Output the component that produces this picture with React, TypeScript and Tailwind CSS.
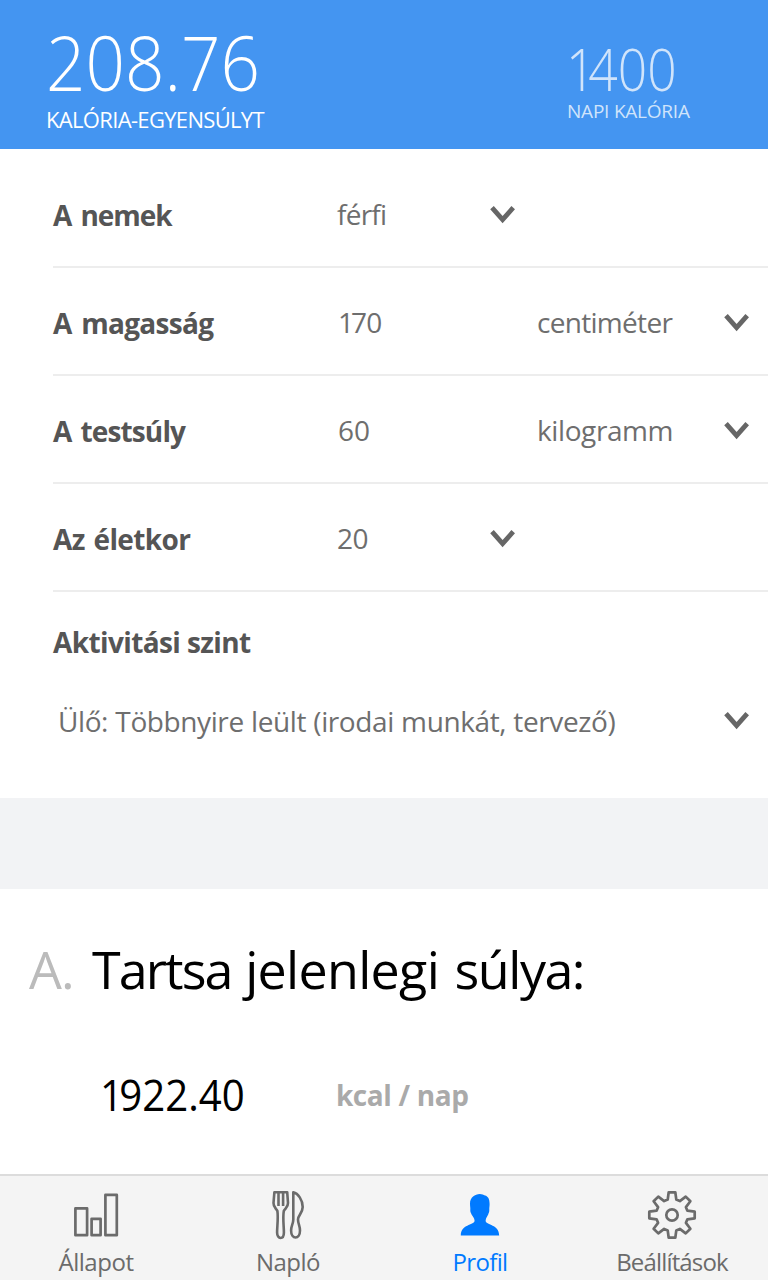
import type { ReactNode } from "react";

function Chevron() {
  return (
    <svg width="26" height="18" viewBox="0 0 26 18" fill="none" className="shrink-0">
      <path d="M2 1.7 12.600 13.600 23.200 1.700" stroke="#666" strokeWidth="4.8" />
    </svg>
  );
}

function Row({ label, children }: { label: ReactNode; children: ReactNode }) {
  return (
    <div className="flex h-[108px] items-center border-b-2 border-[#ededed] pt-[3px] text-[28px]">
      <div className="w-[284px] pt-px font-bold text-[#555]">{label}</div>
      {children}
    </div>
  );
}

const value = "pb-px text-[#6e6e6e]";

function Tab({ label, icon, active = false }: { label: ReactNode; icon: ReactNode; active?: boolean }) {
  return (
    <div className={active ? "flex w-48 flex-col items-center text-[#007aff]" : "flex w-48 flex-col items-center text-[#6b6b6b]"}>
      <div className="h-[62px] pt-[9px]">{icon}</div>
      <div className="text-[24px] leading-[47px] whitespace-nowrap">{label}</div>
    </div>
  );
}

const teeth = [0, 45, 90, 135, 180, 225, 270, 315];

function Gear() {
  const r = (n: number) => Math.round(n * 100) / 100;
  const pts: string[] = [];
  teeth.forEach((deg) => {
    const spin = (x: number, y: number) => {
      const a = (deg * Math.PI) / 180;
      return `${r(30 + x * Math.cos(a) - y * Math.sin(a))} ${r(30 + x * Math.sin(a) + y * Math.cos(a))}`;
    };
    pts.push(spin(-4.3, -15.4), spin(-3.3, -22.7), spin(3.3, -22.7), spin(4.3, -15.4));
  });
  return (
    <svg width="60" height="60" viewBox="0 0 60 60" fill="none" stroke="currentColor" strokeWidth="2.7" strokeLinejoin="round">
      <path d={`M${pts.join("L")}Z`} />
      <circle cx="30" cy="30" r="5.7" />
    </svg>
  );
}

export default function App() {
  return (
    <div className="flex h-[1280px] w-[768px] flex-col overflow-hidden bg-white font-['Open_Sans','Noto_Sans',sans-serif]">
      <header className="flex h-[149px] shrink-0 justify-between bg-[#4495f1] pr-[76px] pl-[46px] text-white">
        <div className="pt-[12px]">
          <div className="origin-left scale-x-[0.91] text-[76px] leading-[99px] font-light">208.76</div>
          <div className="text-[22px] leading-[16px] tracking-[-0.67px]">KALÓRIA-EGYENSÚLYT</div>
        </div>
        <div className="w-[126px] pt-[34px] whitespace-nowrap text-[#d0e4fb]">
          <div className="origin-left scale-x-[0.89] text-[58px] leading-[69px] font-light">
            <span className="tracking-[-8px]">1</span>400
          </div>
          <div className="pl-px text-[19px] leading-[17px] tracking-[-0.22px]">NAPI KALÓRIA</div>
        </div>
      </header>

      <main className="flex grow flex-col">
        <section className="h-[649px] shrink-0 pt-[11px] pl-[53px]">
          <Row label={<span className="tracking-[-1.05px] [word-spacing:3px]">A nemek</span>}>
            <div className={`${value} w-[153px] tracking-[-0.75px]`}>férfi</div>
            <Chevron />
          </Row>
          <Row label={<span className="tracking-[-0.7px] [word-spacing:3px]">A magasság</span>}>
            <div className={`${value} w-[200px] pl-px tracking-[-0.8px]`}>
              <span className="tracking-[-3px]">1</span>70
            </div>
            <div className={`${value} w-[187px] tracking-[-0.7px]`}>centiméter</div>
            <Chevron />
          </Row>
          <Row label={<span className="tracking-[-0.85px] [word-spacing:2.5px]">A testsúly</span>}>
            <div className={`${value} w-[200px] pl-px`}>60</div>
            <div className={`${value} w-[187px] tracking-[-0.4px]`}>kilogramm</div>
            <Chevron />
          </Row>
          <Row label={<span className="tracking-[-0.6px] [word-spacing:2px]">Az életkor</span>}>
            <div className={`${value} w-[153px] tracking-[-0.5px]`}>20</div>
            <Chevron />
          </Row>
          <div className="pt-[30px] text-[28px] leading-10 font-bold tracking-[-0.61px] text-[#555]">Aktivitási szint</div>
          <div className="mt-[39px] flex h-10 items-center">
            <div className={`${value} w-[671px] pl-[5px] text-[28px] tracking-[-0.4px] [word-spacing:0.4px]`}>
              Ülő: Többnyire leült (irodai munkát, tervező)
            </div>
            <Chevron />
          </div>
        </section>
        <div className="h-[91px] shrink-0 bg-[#f2f3f5]" />
        <section className="pt-[45px]">
          <div className="flex pl-[29px] text-[52px] leading-[70px]">
            <div className="w-[63px] tracking-[-0.88px] text-[#bbb]">A.</div>
            <div className="whitespace-nowrap text-black">
              <span className="tracking-[-1.9px]">Tartsa</span> <span className="tracking-[-0.7px]">jelenlegi</span>{" "}
              <span className="pl-[2px] tracking-[-1.5px]">súlya:</span>
            </div>
          </div>
          <div className="mt-[61px] flex items-center">
            <div className="w-[336px] pl-[100px] text-[43px] leading-[60px] text-black">
              <div className="origin-left scale-x-[0.935]">
                <span className="tracking-[-4px]">1</span>922.40
              </div>
            </div>
            <div className="text-[28px] font-bold tracking-[-0.5px] text-[#aaa] [word-spacing:0.5px]">kcal / nap</div>
          </div>
        </section>
      </main>

      <nav className="flex h-[106px] shrink-0 border-t-2 border-[#dcdcdc] bg-[#f4f4f4]">
        <Tab
          label={<span className="tracking-[-0.46px]">Állapot</span>}
          icon={
            <svg width="60" height="60" viewBox="0 0 60 60" fill="none" stroke="currentColor" strokeWidth="2.7" strokeLinejoin="round">
              <rect x="9.4" y="23.4" width="11.7" height="26.8" />
              <rect x="25.6" y="33.8" width="9" height="16.4" />
              <rect x="39.4" y="9.900" width="11.4" height="40.3" />
            </svg>
          }
        />
        <Tab
          label={<span className="tracking-[-0.54px]">Napló</span>}
          icon={
            <svg width="60" height="60" viewBox="0 0 60 60" fill="none" stroke="currentColor" strokeWidth="2.6" strokeLinejoin="round">
              <path d="M16.4 7.2H29.2L30 18C30.200 22 27.300 23.500 25.800 26C24.600 33 25.900 41 25.900 47.500C25.900 54.800 19.100 54.800 19.100 47.500C19.100 41 20.400 33 19.400 26C18 23.500 15.300 22 15.500 18Z" />
              <path d="M20.500 7.500V21M25.100 7.500V21" />
              <path d="M35.300 7.300C40 8.300 44.700 15 44.700 22C44.700 28 40 30.500 40 34.500C40 38.500 42 41 42 45.500C42 54.800 33.100 54.800 33.100 45.500C33.100 41 35.300 38.500 35.300 34.500Z" />
            </svg>
          }
        />
        <Tab
          active
          label={<span className="tracking-[-0.66px]">Profil</span>}
          icon={
            <svg width="60" height="60" viewBox="0 0 60 60" fill="currentColor">
              <path d="M29.800 9C32 9 33.500 9.800 35 10.600C38 11.300 39.600 14 39.600 19C39.600 21.500 39.200 22.500 39.300 24.500C39.500 27 38.500 28 38.200 29.500C37.500 31.500 35.800 32.500 35.600 36C36.500 40.500 49 39 49.200 50.500H10.800C11 39 23.500 40.500 24.600 36C24.400 32.500 22.500 31.500 21.600 29.500C21.200 28 20 27 20.300 24.500C20.500 22.500 20 21.500 20 18.500C20 12.500 25 9 29.800 9Z" />
            </svg>
          }
        />
        <Tab label={<span className="tracking-[-0.83px]">Beállítások</span>} icon={<Gear />} />
      </nav>
    </div>
  );
}
